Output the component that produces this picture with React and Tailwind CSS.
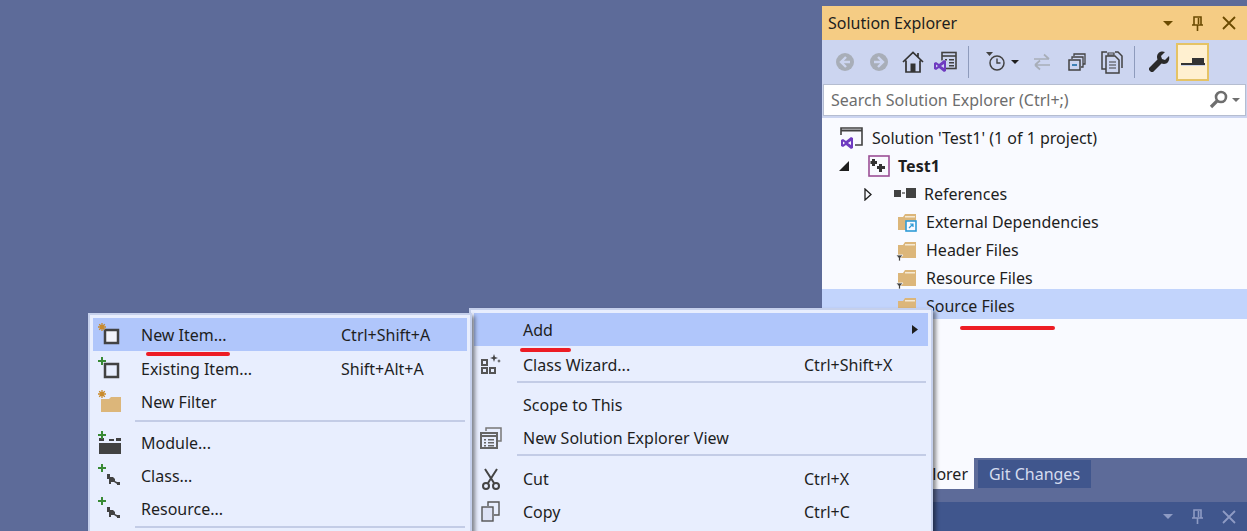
import React from 'react';

// --- Small Drawn Icons ---
const Spark = ({ x = 0, y = 0 }) => (
  <g transform={`translate(${x} ${y})`} stroke="#c98a2b" strokeWidth="1.3">
    <path d="M4 0v8M0 4h8M1.2 1.2l5.6 5.6M6.8 1.2l-5.6 5.6" />
  </g>
);

const Plus = ({ x = 0, y = 0 }) => (
  <path transform={`translate(${x} ${y})`} d="M3 0h2v3h3v2H5v3H3V5H0V3h3z" fill="#388a34" />
);

const NewItemIcon = () => (
  <svg width="24" height="24" viewBox="0 0 24 24">
    <rect x="7" y="7" width="13" height="13" fill="#f3f4fb" stroke="#424242" strokeWidth="2.5" />
    <Spark x="0" y="0" />
  </svg>
);

const ExistingItemIcon = () => (
  <svg width="24" height="24" viewBox="0 0 24 24">
    <rect x="7" y="7" width="13" height="13" fill="#e8eefe" stroke="#424242" strokeWidth="2.5" />
    <Plus x="0" y="0" />
  </svg>
);

const FilterIcon = () => (
  <svg width="24" height="24" viewBox="0 0 24 24">
    <path d="M3 9h8l2-2h10v15H3z" fill="#dcb67a" />
    <Spark x="0" y="0" />
  </svg>
);

const ModuleIcon = () => (
  <svg width="24" height="24" viewBox="0 0 24 24">
    <path d="M1 12h22v11H1z" fill="#424242" />
    <path d="M1 7h5v3H1zM11 8h5v2h-5zM18 7h5v3h-5z" fill="#424242" />
    <Plus x="0" y="0" />
  </svg>
);

const ClassIcon = () => (
  <svg width="24" height="24" viewBox="0 0 24 24">
    <path d="M9 10h3v3h3l2 2v2l2 1h3v3h-3v-1l-3-2h-4v-3H9z" fill="#424242" />
    <path d="M12 14v6" stroke="#424242" strokeWidth="2" />
    <Plus x="0" y="0" />
  </svg>
);

const WizardIcon = () => (
  <svg width="20" height="22" viewBox="0 0 20 22">
    <path d="M0 5h7v7H0zM0 13h7v7H0zM8 13h7v7H8z" fill="#555" />
    <path d="M2 7h3v3H2zM2 15h3v3H2zM10 15h3v3h-3z" fill="#e8eefe" />
    <path d="M13 0l1 3 3 1-3 1-1 3-1-3-3-1 3-1zM18 5l.6 1.4L20 7l-1.4.6L18 9l-.6-1.4L16 7l1.4-.6z" fill="#444" />
  </svg>
);

const ViewIcon = () => (
  <svg width="22" height="22" viewBox="0 0 22 22">
    <path d="M6 4V1h15v13h-3" fill="none" stroke="#777" strokeWidth="1.5" />
    <rect x="1" y="6" width="16" height="15" fill="#e8eefe" stroke="#666" strokeWidth="2" />
    <path d="M1 9h16" stroke="#666" strokeWidth="2" />
    <path d="M4 12h2v1.5H4zM8 12h6v1.5H8zM4 15h2v1.5H4zM8 15h6v1.5H8zM4 18h2v1.5H4zM8 18h6v1.5H8z" fill="#666" />
  </svg>
);

const CutIcon = () => (
  <svg width="20" height="22" viewBox="0 0 20 22">
    <path d="M4 1l9 14M16 1L7 15" stroke="#444" strokeWidth="2" fill="none" />
    <circle cx="5" cy="18" r="3" fill="none" stroke="#444" strokeWidth="2" />
    <circle cx="15" cy="18" r="3" fill="none" stroke="#444" strokeWidth="2" />
  </svg>
);

const CopyIcon = () => (
  <svg width="20" height="22" viewBox="0 0 20 22">
    <path d="M7 5V1h11v13h-5" fill="none" stroke="#555" strokeWidth="1.4" />
    <rect x="1" y="6" width="11" height="14" fill="#dde2f5" stroke="#555" strokeWidth="1.4" />
  </svg>
);

const VsMark = ({ x = 0, y = 0, s = 1 }) => (
  <path
    transform={`translate(${x} ${y}) scale(${s})`}
    d="M0 3l2-1 3 2 5-4 2 1v10l-2 1-5-4-3 2-2-1zM2 4.5v3L4 6zM7 6l3 2V4z"
    fill="#6f3bc0"
    fillRule="evenodd"
  />
);

const CaretDown = ({ color = '#1e1e1e', w = 8, h = 4 }) => (
  <svg width={w} height={h} viewBox="0 0 8 4">
    <path d="M0 0h8L4 4z" fill={color} />
  </svg>
);

const PinIcon = ({ color }) => (
  <svg width="11" height="15" viewBox="0 0 11 15">
    <path d="M2 1h7v8H2zM0 9h11M5.5 9v6M6.5 2v6" fill="none" stroke={color} strokeWidth="1.6" />
  </svg>
);

const CloseIcon = ({ color }) => (
  <svg width="14" height="14" viewBox="0 0 14 14">
    <path d="M1 1l12 12M13 1L1 13" stroke={color} strokeWidth="1.8" />
  </svg>
);

const RoundArrow = ({ flip }) => (
  <svg width="18" height="18" viewBox="0 0 18 18" className={flip ? 'rotate-180' : ''}>
    <circle cx="9" cy="9" r="9" fill="#a8aeb8" />
    <path d="M10 4L5 9l5 5M5 9h9" stroke="#ccd5f0" strokeWidth="2.4" fill="none" />
  </svg>
);

const HomeIcon = () => (
  <svg width="22" height="22" viewBox="0 0 22 22">
    <path d="M1 11L11 1.5 21 11M4 9.5V21h14V9.5M16 2v4" fill="none" stroke="#333" strokeWidth="1.7" />
    <path d="M8.5 12.5h5V21h-5z" fill="#333" />
  </svg>
);

const SyncViewIcon = () => (
  <svg width="24" height="22" viewBox="0 0 24 22">
    <rect x="8" y="1.5" width="14" height="16" fill="#ccd5f0" stroke="#424242" strokeWidth="1.6" />
    <path d="M8 5h14" stroke="#424242" strokeWidth="1.6" />
    <path d="M11 8h2v1.5h-2zM15 8h5v1.5h-5zM15 11h5v1.5h-5zM15 14h5v1.5h-5z" fill="#424242" />
    <path d="M1 10v9l3-1.5 1-.5 3 3 3-2v-7l-3-2-3 3-1.5-2z" fill="#ccd5f0" />
    <g transform="translate(0 9)">
      <VsMark s="1" />
    </g>
  </svg>
);

const ClockIcon = () => (
  <svg width="20" height="20" viewBox="0 0 20 20">
    <path d="M0 0h7L3.5 4z" fill="#424242" />
    <circle cx="11" cy="11" r="7" fill="none" stroke="#424242" strokeWidth="1.5" />
    <path d="M11 6.5V11h3.5" fill="none" stroke="#424242" strokeWidth="1.4" />
  </svg>
);

const SwapIcon = () => (
  <svg width="18" height="18" viewBox="0 0 18 18">
    <path d="M1 6h15M11 1.5L16 6M17 12H2M7 7.5L2 12M7 16.5L2 12" fill="none" stroke="#a8aeb8" strokeWidth="1.7" />
  </svg>
);

const CollapseIcon = () => (
  <svg width="18" height="18" viewBox="0 0 18 18">
    <path d="M6 3V1h11v10h-2M4 6V4h11v10h-2" fill="none" stroke="#424242" strokeWidth="1.3" />
    <rect x="1" y="7" width="11" height="10" fill="#ccd5f0" stroke="#424242" strokeWidth="1.5" />
    <path d="M4 12h5" stroke="#1c6ca8" strokeWidth="1.6" />
  </svg>
);

const PagesIcon = () => (
  <svg width="22" height="24" viewBox="0 0 22 24">
    <path d="M6 19H1V2h5M14 2h3l4 4v12" fill="none" stroke="#424242" strokeWidth="1.5" />
    <path d="M5 6h9l4 4v13H5z" fill="#ccd5f0" stroke="#424242" strokeWidth="1.5" />
    <path d="M8 12h7M8 15h7M8 18h7M7 3h6v2H7z" stroke="#424242" strokeWidth="1.2" fill="none" />
  </svg>
);

const WrenchIcon = () => (
  <svg width="22" height="22" viewBox="0 0 22 22">
    <path d="M21 5l-4 4-3-1-1-3 4-4c-3-1.500-8 0-8 5 0 1 .2 1.700.5 2.500L1 17v2l2 2h2l8.500-8.500c.8.300 1.500.5 2.500.5 4 0 6-4 5-8z" fill="#2a2a2a" />
  </svg>
);

const PreviewIcon = () => (
  <svg width="24" height="8" viewBox="0 0 24 8">
    <path d="M0 5h24" stroke="#9aa6c4" strokeWidth="0" />
    <path d="M11 0h12v5H11z" fill="#333" />
    <path d="M0 5h24v2H0z" fill="#333" />
    <path d="M0 7h24v1H0z" fill="#c9d1e6" />
  </svg>
);

const SearchIcon = () => (
  <svg width="20" height="20" viewBox="0 0 20 20">
    <circle cx="12" cy="7" r="5" fill="none" stroke="#6e6e6e" strokeWidth="2.6" />
    <path d="M8 11l-6 6" stroke="#6e6e6e" strokeWidth="3.2" />
  </svg>
);

const SolutionIcon = () => (
  <svg width="24" height="22" viewBox="0 0 24 22">
    <path d="M1 8V1h21v17h-7" fill="none" stroke="#424242" strokeWidth="1.6" />
    <path d="M1 3.500h21" stroke="#424242" strokeWidth="2" />
    <VsMark x="1" y="10" />
  </svg>
);

const ProjectIcon = () => (
  <svg width="22" height="22" viewBox="0 0 22 22">
    <rect x="1" y="1" width="20" height="20" fill="#f9faff" stroke="#9b4f96" strokeWidth="1.6" />
    <path d="M4 4h3v2h2v3H7v2H4V9H2.500V6H4zM11 9h3v2h3v3h-3v3h-3v-3H9v-3h2z" fill="#333" />
  </svg>
);

const ReferencesIcon = () => (
  <svg width="22" height="12" viewBox="0 0 22 12">
    <path d="M0 2h7v7H0zM12 0h10v10H12z" fill="#424242" />
    <path d="M8 5h3" stroke="#424242" strokeWidth="1.2" />
  </svg>
);

const FolderIcon = ({ filter, link }) => (
  <svg width="22" height="22" viewBox="0 0 22 22">
    <path d="M2 6h5l2-3h11v16H2z" fill="#dcb67a" />
    <path d="M9 5h10v1.500H9z" fill="#f5e9d3" />
    {filter && <path d="M0 16h7L4.500 19v3h-2v-3z" fill="#424242" stroke="#f9faff" strokeWidth="0.8" />}
    {link && (
      <>
        <rect x="10" y="10" width="10" height="10" fill="#f9faff" stroke="#2f9bd6" strokeWidth="1.6" />
        <path d="M13 17l4-4M14 13h3v3" stroke="#2f9bd6" strokeWidth="1.2" fill="none" />
      </>
    )}
  </svg>
);

// --- Solution Explorer Tree ---
const treeRows = [
  { label: "Solution 'Test1' (1 of 1 project)", icon: <SolutionIcon />, iconX: 'ml-[18px]', gap: 'w-[32px]' },
  { label: 'Test1', icon: <ProjectIcon />, bold: true, arrow: 'open' },
  { label: 'References', icon: <ReferencesIcon />, arrow: 'closed' },
  { label: 'External Dependencies', icon: <FolderIcon link /> },
  { label: 'Header Files', icon: <FolderIcon filter /> },
  { label: 'Resource Files', icon: <FolderIcon filter /> },
  { label: 'Source Files', icon: <FolderIcon />, selected: true },
];

const SolutionExplorer = () => (
  <div className="ml-auto mt-[6px] w-[425px] flex flex-col">
    {/* --- Title Bar --- */}
    <div className="h-[34px] bg-[#f5cc84] flex items-center pl-[6px] pr-[11px] text-[#1e1e1e]">
      <span className="text-[16px]">Solution Explorer</span>
      <div className="ml-auto flex items-center gap-[19px]">
        <CaretDown color="#6b4a00" w={10} h={5} />
        <PinIcon color="#6b4a00" />
        <CloseIcon color="#6b4a00" />
      </div>
    </div>

    {/* --- Toolbar --- */}
    <div className="h-[44px] bg-[#ccd5f0] flex items-center pl-[14px]">
      <div className="w-[34px] flex justify-start"><RoundArrow /></div>
      <div className="w-[34px] flex justify-start"><RoundArrow flip /></div>
      <div className="w-[34px] flex justify-start -ml-[2px] mr-[2px]"><HomeIcon /></div>
      <div className="w-[34px] flex justify-start -ml-[4px] mr-[4px]"><SyncViewIcon /></div>
      <div className="w-px h-[32px] bg-[#8e9bbc] ml-[-4px]" />
      <div className="ml-[17px]"><ClockIcon /></div>
      <div className="ml-[5px]"><CaretDown w={8} h={4} /></div>
      <div className="ml-[14px]"><SwapIcon /></div>
      <div className="ml-[17px]"><CollapseIcon /></div>
      <div className="ml-[15px]"><PagesIcon /></div>
      <div className="w-px h-[32px] bg-[#8e9bbc] ml-[11px]" />
      <div className="ml-[13px]"><WrenchIcon /></div>
      <div className="ml-[6px] w-[33px] h-[38px] bg-[#fff0d0] border-2 border-[#e5c365] flex items-center justify-center">
        <PreviewIcon />
      </div>
    </div>

    {/* --- Search Box --- */}
    <div className="h-[34px] bg-[#ccd5f0] px-px pb-[2px]">
      <div className="h-full bg-white border border-[#b5bdd0] flex items-center pl-[7px] pr-[5px]">
        <span className="text-[16px] text-[#6d6d6d]">Search Solution Explorer (Ctrl+;)</span>
        <div className="ml-auto flex items-center gap-[3px]">
          <SearchIcon />
          <CaretDown color="#6e6e6e" />
        </div>
      </div>
    </div>

    {/* --- Tree --- */}
    <div className="h-[340px] bg-[#f9faff] pt-[6px] text-[16px] text-[#1e1e1e]">
      {treeRows.map((row) => (
        <div
          key={row.label}
          className={`flex items-center ${row.selected ? 'h-[30px] bg-[#c2d4fc] -mt-[3px] pt-[3px]' : 'h-[28px]'}`}
        >
          {row.iconX ? (
            <div className="ml-[18px] w-[32px] flex items-center">{row.icon}</div>
          ) : (
            <>
              <div className={`flex items-center justify-center ${row.arrow === 'open' ? 'ml-[16px] w-[12px] mr-[18px]' : row.arrow === 'closed' ? 'ml-[42px] w-[8px] mr-[22px]' : 'ml-[74px] w-0'}`}>
                {row.arrow === 'open' && (
                  <svg width="10" height="10" viewBox="0 0 10 10"><path d="M0 10h10V0z" fill="#1e1e1e" /></svg>
                )}
                {row.arrow === 'closed' && (
                  <svg width="8" height="13" viewBox="0 0 8 13"><path d="M1 1l6 5.500-6 5.500z" fill="none" stroke="#1e1e1e" strokeWidth="1.300" /></svg>
                )}
              </div>
              <div className={row.arrow === 'open' ? 'w-[30px] flex items-center' : 'w-[30px] flex items-center'}>{row.icon}</div>
            </>
          )}
          <span className={row.bold ? 'font-bold' : ''}>{row.label}</span>
        </div>
      ))}
    </div>

    {/* --- Tabs --- */}
    <div className="h-[44px] flex items-start">
      <div className="w-[152px] h-[31px] bg-[#f9faff] flex items-center justify-end pr-[6px] text-[16px] text-[#1e1e1e]">
        Solution Explorer
      </div>
      <div className="ml-[4px] mt-[2px] w-[113px] h-[28px] bg-[#40568d] flex items-center justify-center text-[16px] text-[#d5dcef]">
        Git Changes
      </div>
    </div>

    {/* --- Docked Bar --- */}
    <div className="h-[29px] bg-[#40568d] flex items-center justify-end pr-[11px] gap-[19px]">
      <CaretDown color="#8e9bc4" w={10} h={5} />
      <PinIcon color="#8e9bc4" />
      <CloseIcon color="#8e9bc4" />
    </div>
  </div>
);

// --- Context Menus ---
const MenuRow = ({ icon, label, shortcut, hover, arrow, textX, shortcutX, iconW }) => (
  <div className={`h-[33px] flex items-center relative ${hover ? 'bg-[#b0c6fb]' : ''}`}>
    <div className="flex items-center justify-center shrink-0" style={{ width: iconW }}>{icon}</div>
    <span className="absolute whitespace-nowrap" style={{ left: textX }}>{label}</span>
    {shortcut && <span className="absolute whitespace-nowrap" style={{ left: shortcutX }}>{shortcut}</span>}
    {arrow && (
      <svg className="absolute right-[10px]" width="6" height="9" viewBox="0 0 6 9"><path d="M0 0l6 4.500L0 9z" fill="#1e1e1e" /></svg>
    )}
  </div>
);

const Separator = ({ left, right, className = '' }) => (
  <div className={`h-[2px] bg-[#c3cce6] ${className}`} style={{ marginLeft: left, marginRight: right }} />
);

const Underline = ({ className }) => <div className={`absolute h-[4px] rounded-full bg-[#ed1c24] ${className}`} />;

export default function App() {
  return (
    <div
      className="relative w-[1247px] h-[531px] overflow-hidden bg-[#5d6b99] flex flex-col"
      style={{ fontFamily: '"Noto Sans", sans-serif' }}
    >
      <SolutionExplorer />

      {/* --- Right Menu --- */}
      <div className="absolute left-[469px] top-[308px] w-[464px] h-[240px] bg-[#e8eefe] border-2 border-[#c5d0ec] p-[3px] text-[16px] text-[#1e1e1e] shadow-[3px_3px_4px_rgba(0,0,0,0.45)]">
        <MenuRow hover arrow label="Add" textX={49} iconW={42} />
        <div className="h-[2px]" />
        <MenuRow icon={<WizardIcon />} label="Class Wizard..." shortcut="Ctrl+Shift+X" textX={49} shortcutX={330} iconW={34} />
        <Separator left={43} right={2} className="mb-[5px]" />
        <MenuRow label="Scope to This" textX={49} iconW={34} />
        <MenuRow icon={<ViewIcon />} label="New Solution Explorer View" textX={49} iconW={34} />
        <Separator left={43} right={2} className="mb-[6px]" />
        <MenuRow icon={<CutIcon />} label="Cut" shortcut="Ctrl+X" textX={49} shortcutX={330} iconW={34} />
        <MenuRow icon={<CopyIcon />} label="Copy" shortcut="Ctrl+C" textX={49} shortcutX={330} iconW={34} />
      </div>

      {/* --- Left Menu --- */}
      <div className="absolute left-[88px] top-[313px] w-[384px] h-[240px] bg-[#e8eefe] border-2 border-[#c5d0ec] p-[3px] text-[16px] text-[#1e1e1e] shadow-[3px_3px_4px_rgba(0,0,0,0.45)]">
        <MenuRow hover icon={<NewItemIcon />} label="New Item..." shortcut="Ctrl+Shift+A" textX={48} shortcutX={248} iconW={34} />
        <div className="h-[1px]" />
        <MenuRow icon={<ExistingItemIcon />} label="Existing Item..." shortcut="Shift+Alt+A" textX={48} shortcutX={248} iconW={34} />
        <MenuRow icon={<FilterIcon />} label="New Filter" textX={48} iconW={34} />
        <Separator left={42} right={2} className="mb-[4px] mt-[2px]" />
        <MenuRow icon={<ModuleIcon />} label="Module..." textX={48} iconW={34} />
        <MenuRow icon={<ClassIcon />} label="Class..." textX={48} iconW={34} />
        <MenuRow icon={<ClassIcon />} label="Resource..." textX={48} iconW={34} />
        <Separator left={42} right={2} className="mt-[1px]" />
      </div>

      {/* --- Red Annotation Strokes --- */}
      <Underline className="left-[146px] top-[352px] w-[84px]" />
      <Underline className="left-[520px] top-[348px] w-[51px]" />
      <Underline className="left-[960px] top-[326px] w-[95px]" />
    </div>
  );
}
